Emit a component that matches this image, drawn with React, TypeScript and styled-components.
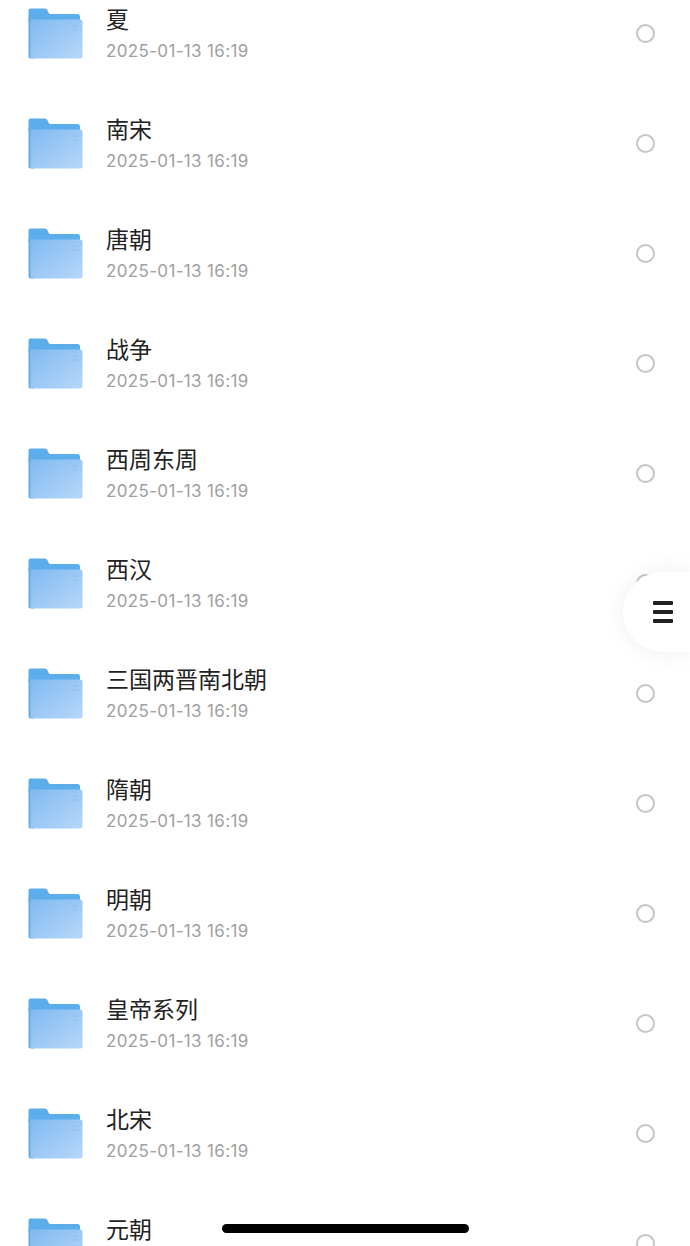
import * as React from 'react';
import styled, { createGlobalStyle } from 'styled-components';

const folders = ['夏', '南宋', '唐朝', '战争', '西周东周', '西汉', '三国两晋南北朝', '隋朝', '明朝', '皇帝系列', '北宋', '元朝'];

const FolderIcon = ({ id }: { id: number }) => (
  <FolderSvg width="56" height="52" viewBox="0 0 56 52">
    <defs>
      <linearGradient id={`front-${id}`} x1="0" y1="0" x2="1" y2="1">
        <stop offset="0" stopColor="#80baf0" />
        <stop offset="1" stopColor="#b7d7f9" />
      </linearGradient>
    </defs>
    <path d="M2.5 0.5H16.5C18 0.5 19 1.3 19.6 2.6L20.6 4.8C21 5.6 21.6 6 22.6 6H49.5C51.2 6 52 7 52 8.5V14H0.5V2.5C0.5 1.3 1.3 0.5 2.5 0.5Z" fill="#5cadec" />
    <path d="M0.5 10H6V50.5H2.5C1.3 50.5 0.5 49.7 0.5 48.5Z" fill="#62aee9" />
    <path d="M3 11.5H52C53.5 11.5 54.5 12.5 54.5 14V48.5C54.5 49.7 53.6 50.5 52.5 50.5H4C3 50.5 2.5 50 2.5 49V12Z" fill={`url(#front-${id})`} />
    <rect x="44.5" y="17.5" width="5" height="1.4" fill="#94c0e9" />
    <rect x="44.5" y="21.5" width="5" height="1.4" fill="#94c0e9" />
  </FolderSvg>
);

export default function App() {
  return (
    <Screen>
      <GlobalStyle />
      <List>
        {folders.map((name, index) => (
          <Row key={name}>
            <FolderIcon id={index} />
            <Info>
              <Title>{name}</Title>
              <Time>2025-01-13 16:19</Time>
            </Info>
            <Radio />
          </Row>
        ))}
      </List>
      <FloatButton>
        <MenuBar />
        <MenuBar />
        <MenuBar />
      </FloatButton>
      <HomeBar />
    </Screen>
  );
}

const GlobalStyle = createGlobalStyle`
  html, body {
    margin: 0;
    padding: 0;
    background: #fff;
  }
`;

const Screen = styled.div`
  position: relative;
  width: 690px;
  height: 1246px;
  overflow: hidden;
  background: #fff;
  font-family: Inter, "Noto Sans CJK SC", sans-serif;
`;

const List = styled.ul`
  list-style: none;
  margin: -22px 0 0;
  padding: 0;
`;

const Row = styled.li`
  display: flex;
  align-items: center;
  height: 110px;
  padding: 0 35px 0 28px;
  box-sizing: border-box;
`;

const FolderSvg = styled.svg`
  flex: 0 0 56px;
  margin-top: 2px;
`;

const Info = styled.div`
  flex: 1;
  margin-left: 22px;
  display: flex;
  flex-direction: column;
  margin-top: 0;
`;

const Title = styled.p`
  margin: 0;
  font-family: "Noto Sans CJK SC", sans-serif;
  font-size: 23px;
  line-height: 30px;
  color: #222;
`;

const Time = styled.p`
  margin: 5px 0 0;
  font-size: 17px;
  line-height: 26px;
  letter-spacing: 0.34px;
  color: #a0a0a0;
`;

const Radio = styled.span`
  width: 19px;
  height: 19px;
  box-sizing: border-box;
  border: 2px solid #c6c6c6;
  border-radius: 50%;
`;

const FloatButton = styled.div`
  position: absolute;
  top: 572px;
  right: 0;
  width: 67px;
  height: 80px;
  box-sizing: border-box;
  padding-left: 30px;
  display: flex;
  flex-direction: column;
  justify-content: center;
  gap: 5px;
  background: #fff;
  border-radius: 40px 0 0 40px;
  box-shadow: 0 0 24px rgba(0, 0, 0, 0.07);
`;

const MenuBar = styled.span`
  width: 20px;
  height: 4px;
  background: #222;
  border-radius: 1px;
`;

const HomeBar = styled.div`
  position: absolute;
  left: 222px;
  top: 1224px;
  width: 247px;
  height: 9px;
  background: #000;
  border-radius: 5px;
`;
